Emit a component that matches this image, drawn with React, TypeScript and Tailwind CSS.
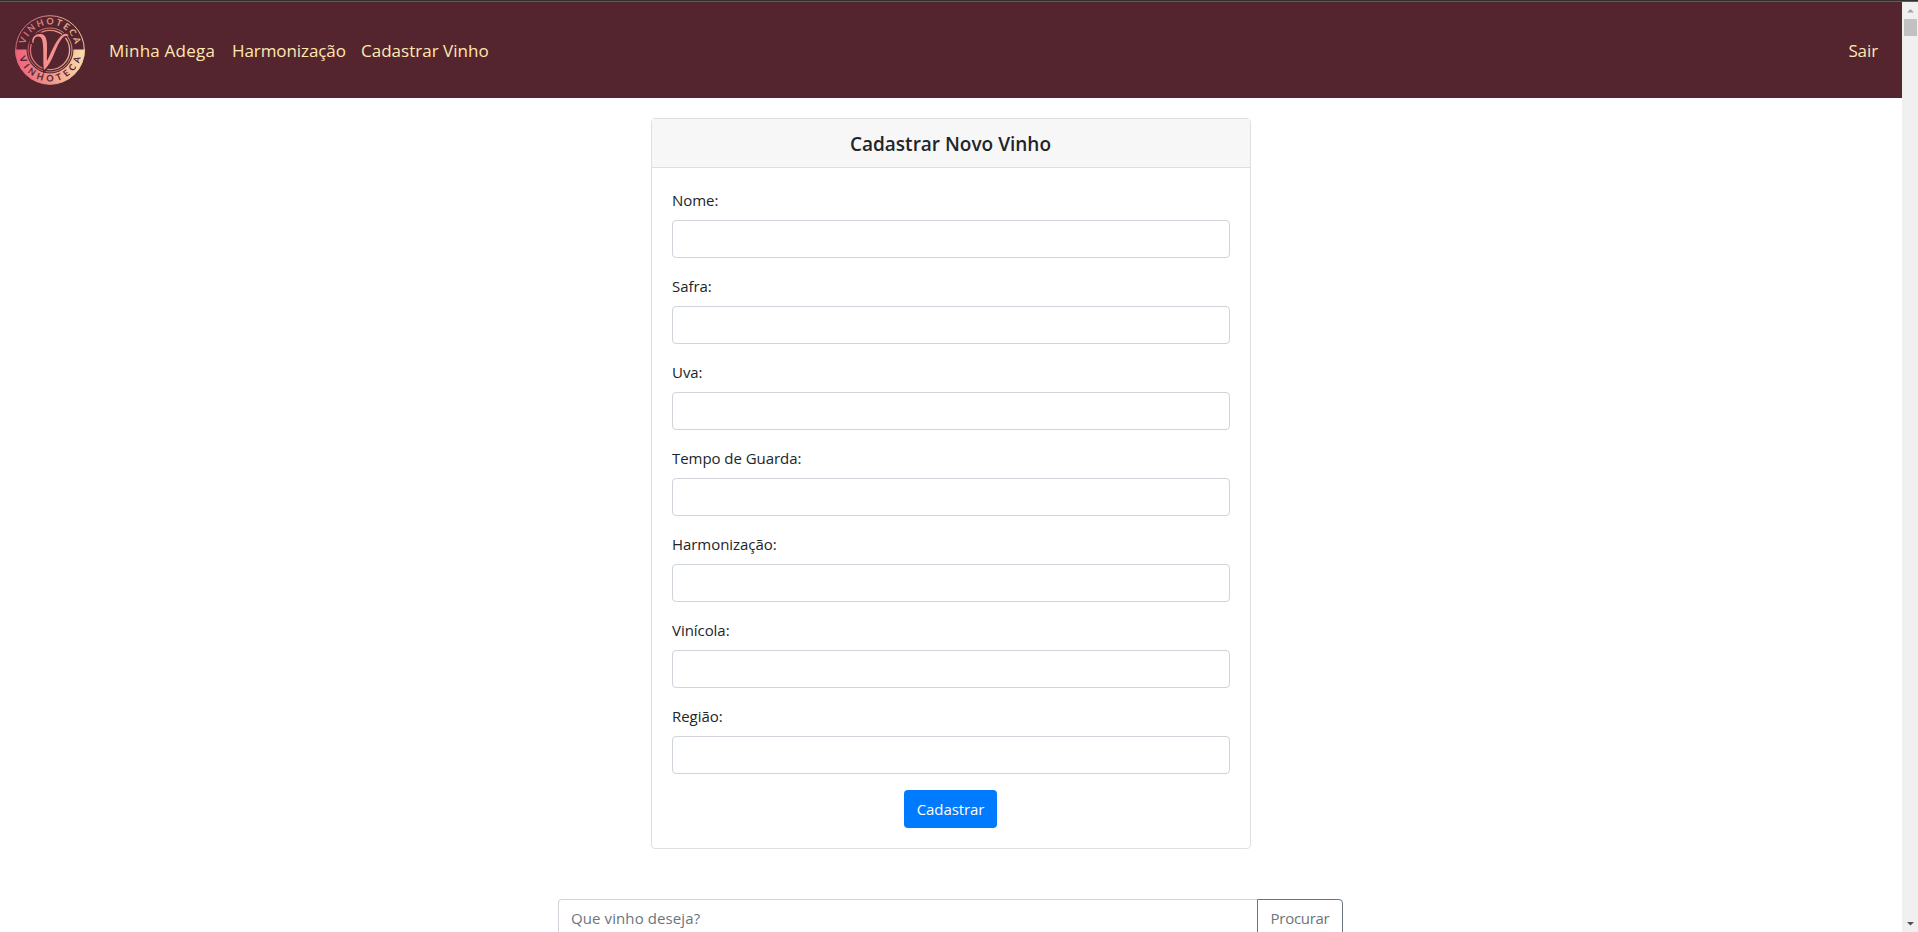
import React from "react";

const fields = ["Nome:", "Safra:", "Uva:", "Tempo de Guarda:", "Harmonização:", "Vinícola:", "Região:"];

function Logo() {
  return (
    <svg viewBox="0 0 72 72" className="h-[72px] w-[72px]" aria-label="Vinhoteca">
      <defs>
        <linearGradient id="wine" x1="0" y1="0" x2="1" y2="0">
          <stop offset="0" stopColor="#f0607c" />
          <stop offset="0.5" stopColor="#f0948a" />
          <stop offset="1" stopColor="#fbe0ae" />
        </linearGradient>
        <linearGradient id="rim" gradientUnits="userSpaceOnUse" x1="1" y1="0" x2="71" y2="0">
          <stop offset="0" stopColor="#d9627a" />
          <stop offset="0.5" stopColor="#e08a80" />
          <stop offset="1" stopColor="#f0cfa0" />
        </linearGradient>
        <path id="arcTop" d="M10.500 36a25.500 25.500 0 0 1 51 0" />
        <path id="arcBottom" d="M4.500 36a31.500 31.500 0 0 0 63 0" />
      </defs>
      <path d="M1 35.500a35 35 0 0 0 70 0z" fill="url(#wine)" />
      <circle cx="36" cy="36" r="34.300" fill="none" stroke="url(#rim)" strokeWidth="1" />
      <circle cx="36" cy="36" r="23.500" fill="#54252f" />
      <circle cx="36" cy="36" r="22" fill="none" stroke="url(#rim)" strokeWidth="0.8" />
      <circle cx="36" cy="36" r="19.600" fill="none" stroke="url(#rim)" strokeWidth="1.300" />
      <text fontFamily="Lato" fontSize="9" fontWeight="700" fill="url(#rim)" letterSpacing="2">
        <textPath href="#arcTop" startOffset="51%" textAnchor="middle">VINHOTECA</textPath>
      </text>
      <text fontFamily="Lato" fontSize="9" fontWeight="700" fill="#54252f" letterSpacing="3.9">
        <textPath href="#arcBottom" startOffset="52%" textAnchor="middle">VINHOTECA</textPath>
      </text>
      <path
        d="M18 30C17 23 24 19 29 22C34 26 29 42 31 54C39 43 43 27 51 21C53 19.500 55 20 54 22"
        fill="none"
        stroke="#54252f"
        strokeWidth="5"
      />
      <path
        d="M18.500 29C17 23 22 19.500 27 20C35.500 21 32.500 36 33 47C38 37 42 25 49 20.500C52 18.800 55 20 54.500 22C49 20 46 27 43 33C39.500 41 36 51 30 56C28.500 46 31 25 26 23C22 21.500 19.500 24 19.500 29Z"
        fill="#f4918c"
      />
    </svg>
  );
}

function Scrollbar() {
  return (
    <div className="flex h-full w-4 shrink-0 flex-col items-center bg-[#f0f0f0]">
      <svg viewBox="0 0 16 17" className="h-[17px] w-4 shrink-0">
        <path d="M5 10.500h7L8.500 7z" fill="#a3a3a3" />
      </svg>
      <div className="h-[17px] w-[13px] bg-[#c1c1c1]" />
      <svg viewBox="0 0 16 17" className="mt-auto h-[17px] w-4 shrink-0">
        <path d="M5 7h7L8.500 10.500z" fill="#505050" />
      </svg>
    </div>
  );
}

export default function App() {
  return (
    <div className="flex h-[932px] w-[1918px] flex-col overflow-hidden bg-white font-['Open_Sans','Noto_Sans',sans-serif] text-[#212529]">
      <div className="h-0.5 shrink-0 border-b border-[#5c5c5c] bg-[#303030]" />
      <div className="flex min-h-0 flex-1">
        <div className="flex min-w-0 flex-1 flex-col items-center">
          <nav className="flex h-24 w-full shrink-0 items-center bg-[#54252f] pr-6 pl-3.5 text-[17px] text-[#ffe8b0]">
            <Logo />
            <a className="ml-[23px] w-[107px] pt-0.5 tracking-[0.22px] whitespace-nowrap">Minha Adega</a>
            <a className="ml-4 w-[113px] pt-0.5 tracking-[-0.08px] whitespace-nowrap">Harmonização</a>
            <a className="ml-4 pt-0.5 tracking-[0.02px] whitespace-nowrap">Cadastrar Vinho</a>
            <a className="ml-auto pt-0.5 tracking-[-0.1px]">Sair</a>
          </nav>

          <section className="mt-5 flex w-[600px] shrink-0 flex-col rounded border border-[#dfdfdf]">
            <h5 className="border-b border-[#dfdfdf] bg-[#f7f7f7] pt-[13px] pr-px pb-[11px] text-center text-[19px] leading-6 font-semibold">
              Cadastrar Novo Vinho
            </h5>
            <form className="flex flex-col p-5">
              {fields.map((name) => (
                <label key={name} className="mb-4 flex flex-col gap-2">
                  <span className="text-[15px] leading-6 tracking-[-0.05px]">{name}</span>
                  <input className="h-[38px] rounded border border-[#ced4da] px-3" />
                </label>
              ))}
              <button
                type="button"
                className="mr-px h-[38px] w-[93px] self-center rounded bg-[#007bff] text-[15px] tracking-[-0.08px] text-white"
              >
                Cadastrar
              </button>
            </form>
          </section>

          <div className="mt-[50px] mr-px flex h-[38px] w-[785px] shrink-0">
            <input
              placeholder="Que vinho deseja?"
              className="min-w-0 flex-1 rounded-l border border-r-0 border-[#ced4da] px-3 text-[15px] tracking-[0.1px] placeholder:text-[#6c757d]"
            />
            <button
              type="button"
              className="w-[86px] rounded-r border border-[#6c757d] text-[15px] tracking-[-0.3px] text-[#6c757d]"
            >
              Procurar
            </button>
          </div>
        </div>
        <Scrollbar />
      </div>
    </div>
  );
}
